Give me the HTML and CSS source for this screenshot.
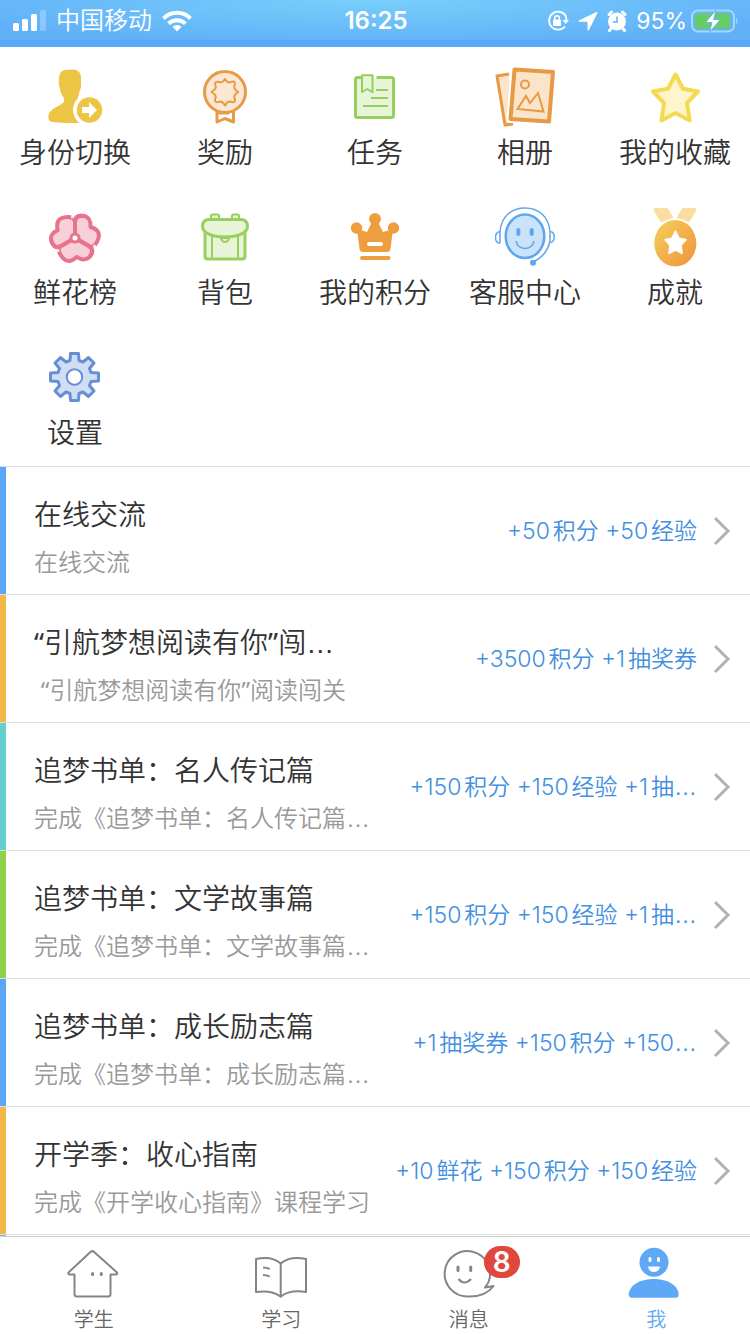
FILE: index.html
```html
<!DOCTYPE html>
<html lang="zh-CN">
<head>
<meta charset="utf-8">
<meta name="viewport" content="width=device-width, initial-scale=1">
<title>我</title>
<link rel="stylesheet" href="styles.css">
</head>
<body>
<header class="status">
  <div class="status-left">
    <svg width="33" height="22" viewBox="0 0 33 22" fill="#fff"><rect y="13" width="6" height="8" rx="1.5"/><rect x="9" y="9" width="6" height="12" rx="1.5"/><rect x="18" y="4" width="6" height="17" rx="1.5"/><rect x="27" y="0" width="6" height="21" rx="1.5" opacity=".25"/></svg>
    <span class="carrier">中国移动</span>
    <svg width="30" height="22" viewBox="0 0 30 22" fill="none" stroke="#fff" stroke-width="4"><path d="M1.500 8.500a19 19 0 0 1 27 0M6.600 13.600a12 12 0 0 1 16.800 0"/><path d="M15 21.500l-4.600-4.700a6.500 6.500 0 0 1 9.200 0z" fill="#fff" stroke="none"/></svg>
  </div>
  <time class="clock">16:25</time>
  <div class="status-right">
    <svg width="22" height="22" viewBox="0 0 22 22"><path d="M18.500 5.500A9 9 0 1 0 18 16.500M18.500 5.500q1 2 1 5" fill="none" stroke="#fff" stroke-width="1.800"/><path d="M15.500 10h6.500l-3.200 4z" fill="#fff"/><rect x="6" y="9.500" width="8" height="6.500" rx="1" fill="#fff"/><path d="M7.700 10V8a2.300 2.300 0 0 1 4.600 0v2" fill="none" stroke="#fff" stroke-width="1.500"/></svg>
    <svg width="20" height="20" viewBox="0 0 20 20" fill="#fff"><path d="M18.500 1L1.200 9.300c-1 .6-.6 1.400.2 1.400H9.500v8c0 .9 1 1.200 1.500.2L19.400 2c.3-.8-.2-1.200-.9-1z"/></svg>
    <svg width="20" height="22" viewBox="0 0 20 22"><circle cx="10" cy="11.500" r="9" fill="#fff"/><path d="M2 4.500L4.500 2M18 4.500L15.500 2M4 18.500l-1.500 2M16 18.500l1.500 2" stroke="#fff" stroke-width="3" stroke-linecap="round"/><path d="M10 6.500V12H5.800" fill="none" stroke="#62b1f8" stroke-width="1.500"/></svg>
    <span class="percent">95%</span>
    <svg width="48" height="24" viewBox="0 0 48 24"><rect x="1" y="1.500" width="42" height="21" rx="6" fill="none" stroke="#a8d5fc" stroke-width="2"/><path d="M45 8.500q3 3.500 0 7z" fill="#a8d5fc"/><rect x="4" y="4.500" width="35" height="15" rx="3" fill="#66cd62"/><path d="M25 1L14.500 13.500h6.500L18.500 23 29.500 10.500h-6.800z" fill="#fff" stroke="#66b4f5" stroke-width="1"/></svg>
  </div>
</header>

<main class="content">
<nav class="grid" aria-label="功能">
  <a class="entry" href="#"><svg class="icon" viewBox="0 0 60 60"><path d="M14 12C14 5 18 1.500 24 3c6-1.500 12 1 12 7.500v8c0 4-1.500 5-2 8-.5 3-2 5-1 8 2 3 7 3.500 12 6v15.300c-13 .5-27 .5-37-.8-4-.5-5-3-4.500-6.500.6-5 7-8 11.500-10.500 5-2.500 5-5 3-8.500-1.500-2.500-3-4-3-8-1-3-1.500-6-1-9z" fill="#ebc543"/><circle cx="44.500" cy="43" r="16.500" fill="#fff"/><circle cx="44.500" cy="43" r="12.700" fill="#ebc543"/><path d="M37 40h7v-5l8 8-8 8v-5h-7z" fill="#fff"/></svg><span>身份切换</span></a>
  <a class="entry" href="#"><svg class="icon" viewBox="0 0 60 60" fill="#fce8d2" stroke="#e79a48" stroke-linejoin="round"><path d="M22 42v13l8-3.500 8.500 3.500V42" fill="#fff" stroke-width="3"/><circle cx="30" cy="25" r="20.500" stroke-width="3"/><path d="M30 12q2.500 4 5 3.300 4-1.500 4.500-.1.800 1-.3 4.800 0 2.500 4 5-4 2.500-4 5 1.500 3.500.3 4.700-1 1.200-4.700-.2-2.300 0-4.800 4-2.500-4-4.800-4-3.700 1.300-4.700.2-1.200-1.200.3-4.700 0-2.500-4.300-5 4-2.500 4.300-5-1.300-3.700-.2-4.700 1-1.200 4.700 0Q28 15.500 30 12z" stroke-width="2"/><path d="M22 46.500h12" stroke-width="2"/></svg><span>奖励</span></a>
  <a class="entry" href="#"><svg class="icon" viewBox="0 0 60 60" fill="#e7f4d7" stroke="#96cf5b"><rect x="10.500" y="10.500" width="38" height="40" rx="2" stroke-width="3"/><path d="M28.500 7h3v18h-3z" fill="#fff" stroke="none"/><path d="M32 12v14h-4V12z" stroke="none"/><path d="M17 8.200h10.500v17L22.300 22 17 25z" stroke-width="2" stroke-linejoin="round"/><path d="M31 23h12M26 31h17M18 39h25" stroke-width="2"/></svg><span>任务</span></a>
  <a class="entry" href="#"><svg class="icon" viewBox="0 0 60 60" fill="#fbe4ca" stroke="#e79944" stroke-linejoin="round"><path d="M14 7L2 9l8 49 8-1" stroke-width="3"/><path d="M19.500 2.500L58 5l-4 49.500L15.500 52z" stroke="#fff" stroke-width="8"/><path d="M19.500 2.500L58 5l-4 49.500L15.500 52z" stroke-width="4"/><circle cx="30" cy="17.500" r="4" stroke-width="2"/><path d="M22.500 42l8.500-13 4 7 8-10 5.500 18.500z" stroke-width="2" stroke-linejoin="miter"/></svg><span>相册</span></a>
  <a class="entry" href="#"><svg class="icon" viewBox="0 0 60 60"><path d="M30.500 7.500L38 21.800l15 2.700-11 11.500 2.700 17.500-14.200-7.500-14 7.500L19 36 8 24.500l15-2.700z" fill="#fdf5cb" stroke="#f4da50" stroke-width="4" stroke-linejoin="round"/></svg><span>我的收藏</span></a>
  <a class="entry" href="#"><svg class="icon" viewBox="0 0 60 60" fill="#f9d0da" stroke="#e7748d" stroke-width="4" stroke-linecap="round" stroke-linejoin="round">
    <path d="M30 31V15c0-6 5-7 9-6 5 1 7 6 6.500 11 7 2 9.500 6 8 11-.8 3-2 5-3.500 7z"/>
    <path d="M30 31V15c0-6 5-7 9-6 5 1 7 6 6.500 11 7 2 9.500 6 8 11-.8 3-2 5-3.500 7z" transform="rotate(120 30 31)"/>
    <path d="M30 31V15c0-6 5-7 9-6 5 1 7 6 6.500 11 7 2 9.500 6 8 11-.8 3-2 5-3.500 7z" transform="rotate(240 30 31)"/>
    <g stroke="#f9d0da" stroke-width="6"><path d="M38 30l8 4.500"/><path d="M38 30l8 4.500" transform="rotate(120 30 31)"/><path d="M38 30l8 4.500" transform="rotate(240 30 31)"/></g>
    <g fill="none"><path d="M30 31V15c0-6 5-7 9-6"/><path d="M30 31V15c0-6 5-7 9-6" transform="rotate(120 30 31)"/><path d="M30 31V15c0-6 5-7 9-6" transform="rotate(240 30 31)"/></g>
    <g stroke="#fff" stroke-width="1.500"><path d="M49 38.500l5 3"/><path d="M49 38.500l5 3" transform="rotate(120 30 31)"/><path d="M49 38.500l5 3" transform="rotate(240 30 31)"/></g>
    <circle cx="30" cy="31" r="4" fill="#fff" stroke-width="3"/></svg><span>鲜花榜</span></a>
  <a class="entry" href="#"><svg class="icon" viewBox="0 0 60 60" fill="#e7f4d7" stroke="#97d05b"><path d="M16 13V9q0-1.500 1.500-1.500h5Q24 7.500 24 9v4M37 13V9q0-1.500 1.500-1.500h4Q44 7.500 44 9v4" stroke-width="2"/><path d="M10 24v25q0 3 3 3h34q3 0 3-3V24z" stroke-width="3"/><path d="M17 27v25M43 27v25" stroke-width="2"/><path d="M26 31q1 4 4 4t4-4z" stroke-width="2"/><path d="M14 12.500h32c5 0 6.500 3 6.500 7 0 7-11 10.500-22.500 10.500S7.500 26.500 7.500 19.500c0-4 1.500-7 6.500-7z" stroke-width="3"/></svg><span>背包</span></a>
  <a class="entry" href="#"><svg class="icon" viewBox="0 0 60 60" fill="#ef9e3f"><circle cx="30" cy="12" r="6"/><circle cx="11.500" cy="21" r="5.700"/><circle cx="48.500" cy="21" r="5.700"/><path d="M12 22l10 3 5-10h6l5 10 10-3-2.500 20q-.5 3-3.500 3H18q-3 0-3.500-3z"/><path d="M17 51h26.500" stroke="#ef9e3f" stroke-width="4" stroke-linecap="round"/><path d="M24 37h12" stroke="#fff" stroke-width="4" stroke-linecap="round"/></svg><span>我的积分</span></a>
  <a class="entry" href="#"><svg class="icon" viewBox="0 0 60 60" fill="none" stroke="#5ea6ee"><path d="M5 36V25C6 9 17 1 30 1s24 8 25 24v9c-2 9-8 17-17 21" stroke-width="1.500"/><path d="M5 24.500c-6 1-6 11 0 12M55.500 24.500c5 1 5 10 0 11" stroke-width="1.500"/><ellipse cx="30" cy="29.300" rx="19.300" ry="21.800" fill="#cae3fb" stroke-width="2.500"/><path d="M23.300 23v4M36.700 23v4" stroke-width="4" stroke-linecap="round"/><path d="M21 34c2 10 16 10 18 0" stroke-width="1.500"/><circle cx="38" cy="55.700" r="3" fill="#5ea6ee" stroke="none"/></svg><span>客服中心</span></a>
  <a class="entry" href="#"><svg class="icon" viewBox="0 0 60 60"><defs><linearGradient id="medal" x1="0" y1="0" x2="1" y2="1"><stop offset="0" stop-color="#f6cf5c"/><stop offset="1" stop-color="#ef923b"/></linearGradient></defs><path d="M10 1h11q2 0 3 2l4.500 8q-7 1-12.500 4.500L9 4q-1-3 1-3zM50 1H39q-2 0-3 2l-4.500 8q7 1 12.500 4.500L51 4q1-3-1-3z" fill="#f9dea0"/><ellipse cx="30.300" cy="36.300" rx="21" ry="23.300" fill="url(#medal)"/><path d="M30.500 24.500l3.300 7 7 1.200-5 5.500 1 8-6.300-3.500-6.300 3.500 1-8-5-5.500 7-1.200z" fill="#fff" stroke="#fff" stroke-width="2" stroke-linejoin="round"/></svg><span>成就</span></a>
  <a class="entry" href="#"><svg class="icon" viewBox="0 0 60 60" stroke="#6590d3"><path transform="translate(29.500 30)" d="M-4-23.500H4L4.500-16.500 8.500-15 14-19.500 19.500-14 15-8.500 16.500-4.500 24-4V4L16.500 4.500 15 8.500 19.500 14 14 19.500 8.500 15 4.500 16.500 4 23.500H-4L-4.500 16.500-8.500 15-14 19.500-19.500 14-15 8.500-16.500 4.500-24 4V-4L-16.500-4.500-15-8.500-19.500-14-14-19.500-8.500-15-4.500-16.500z" fill="#d1ddf3" stroke-width="3" stroke-linejoin="round"/><circle cx="29.500" cy="30" r="7.700" fill="#fff" stroke-width="2"/></svg><span>设置</span></a>
</nav>

<ul class="tasks">
  <li class="task blue"><a class="task-link" href="#"><span class="texts"><span class="title">在线交流</span><span class="sub">在线交流</span></span><span class="reward">+50积分 +50经验</span><svg class="chevron" viewBox="0 0 18 30"><path d="M2 2l13 13L2 28"/></svg></a></li>
  <li class="task orange"><a class="task-link" href="#"><span class="texts"><span class="title"><span class="quote">“</span>引航梦想阅读有你<span class="quote">”</span>闯<span class="dots">…</span></span><span class="sub">&nbsp;<span class="quote">“</span>引航梦想阅读有你<span class="quote">”</span>阅读闯关</span></span><span class="reward">+3500积分 +1抽奖券</span><svg class="chevron" viewBox="0 0 18 30"><path d="M2 2l13 13L2 28"/></svg></a></li>
  <li class="task teal"><a class="task-link" href="#"><span class="texts"><span class="title">追梦书单：名人传记篇</span><span class="sub">完成《追梦书单：名人传记篇<span class="dots">…</span></span></span><span class="reward">+150积分 +150经验 +1抽<span class="dots">…</span></span><svg class="chevron" viewBox="0 0 18 30"><path d="M2 2l13 13L2 28"/></svg></a></li>
  <li class="task green"><a class="task-link" href="#"><span class="texts"><span class="title">追梦书单：文学故事篇</span><span class="sub">完成《追梦书单：文学故事篇<span class="dots">…</span></span></span><span class="reward">+150积分 +150经验 +1抽<span class="dots">…</span></span><svg class="chevron" viewBox="0 0 18 30"><path d="M2 2l13 13L2 28"/></svg></a></li>
  <li class="task blue"><a class="task-link" href="#"><span class="texts"><span class="title">追梦书单：成长励志篇</span><span class="sub">完成《追梦书单：成长励志篇<span class="dots">…</span></span></span><span class="reward">+1抽奖券 +150积分 +150<span class="dots">…</span></span><svg class="chevron" viewBox="0 0 18 30"><path d="M2 2l13 13L2 28"/></svg></a></li>
  <li class="task orange"><a class="task-link" href="#"><span class="texts"><span class="title">开学季：收心指南</span><span class="sub">完成《开学收心指南》课程学习</span></span><span class="reward">+10鲜花 +150积分 +150经验</span><svg class="chevron" viewBox="0 0 18 30"><path d="M2 2l13 13L2 28"/></svg></a></li>
  <li class="task teal"></li>
</ul>
</main>

<nav class="tabs" aria-label="主导航">
  <a class="tab" href="#"><span class="tab-icon"><svg viewBox="0 0 60 56" fill="none" stroke="#858585" stroke-width="2" stroke-linejoin="round" stroke-linecap="round"><path d="M10.500 28.500H5q-1.500-1 0-2.500L26.500 6q1.800-1.700 3.600 0L52.500 26q1.500 1.500 0 2.500h-6V48q0 2.500-2.500 2.500H13q-2.500 0-2.500-2.500z"/><path d="M28.600 27.500v1M37.300 27.500v1" stroke-width="3"/></svg></span><span>学生</span></a>
  <a class="tab" href="#"><span class="tab-icon"><svg viewBox="0 0 60 56" fill="none" stroke="#858585" stroke-width="2" stroke-linejoin="round"><path d="M29.700 17.500C23 11.500 14 11 5 13v33c10-1.500 18-.5 24.700 4.700C36 45.500 45 44.500 55 46V13c-9-2-18.500-1.500-25.300 4.500zV50.500"/><path d="M12 21.500q3.500 0 6.700 1.500M12 29q3.500 0 6.700 1.500"/></svg></span><span>学习</span></a>
  <a class="tab" href="#"><span class="tab-icon"><svg viewBox="0 0 60 56" fill="none" stroke="#858585" stroke-width="2" stroke-linejoin="round"><path d="M49.700 35.500A22.700 22.700 0 1 0 28 50.500C39 51 48 49 54.500 40l-8.500 1.500q2.500-3 3.700-6z"/><path d="M19 21v3.500M31.700 21v3.500" stroke-width="3" stroke-linecap="round"/><path d="M19.500 33q6 7 12.500 0"/></svg><span class="badge">8</span></span><span>消息</span></a>
  <a class="tab active" href="#" aria-current="page"><span class="tab-icon"><svg viewBox="0 0 60 56" fill="#5ea8f5"><circle cx="28" cy="16.300" r="14.500"/><path d="M2.700 48C4 38 16 33 27.700 33s24 5 25 15q0 3.700-3 3.700H6q-3.300 0-3.300-3.700z"/><path d="M24 12.500v2M32.500 12.500v2" stroke="#fff" stroke-width="3" stroke-linecap="round"/><path d="M22 20.500h12q-1 5.500-6 5.500t-6-5.500z" fill="#fff"/></svg></span><span>我</span></a>
</nav>
</body>
</html>
```
FILE: styles.css
```css
* { box-sizing: border-box; }
body {
  margin: 0;
  height: 100vh;
  display: flex;
  flex-direction: column;
  background: #fff;
  color: #333;
  font-family: Inter, "Noto Sans CJK SC", sans-serif;
  font-weight: 350;
  text-autospace: normal;
}
a { color: inherit; text-decoration: none; }
svg { display: block; flex: none; }

.status {
  flex: none;
  display: grid;
  grid-template-columns: 1fr auto 1fr;
  align-items: center;
  height: 47px;
  padding: 1px 11px 0 13px;
  border-bottom: 7px solid #5ba7f7;
  background: radial-gradient(ellipse 60% 110% at 50% 0, #78cffb, #62b1f8);
  color: #fff;
}
.status-left, .status-right { display: flex; align-items: center; }
.status-left { gap: 10px; }
.status-right { justify-content: flex-end; gap: 9px; }
.carrier { font-size: 24px; line-height: 32px; }
.clock { font-size: 24px; line-height: 32px; font-weight: 600; }
.percent { font-size: 23px; line-height: 32px; font-weight: 400; margin-right: -5px; }

.content { flex: 1; min-height: 0; overflow-y: auto; scrollbar-width: none; }
.grid {
  display: grid;
  grid-template-columns: repeat(5, 1fr);
  border-bottom: 1px solid #dedede;
}
.entry {
  display: flex;
  flex-direction: column;
  align-items: center;
  gap: 11px;
  padding: 20px 0 19px;
  font-size: 28px;
  line-height: 30px;
  white-space: nowrap;
}
.entry:last-child { padding-bottom: 18px; }
.icon { width: 60px; height: 60px; }

.tasks { list-style: none; margin: 0; padding: 0; }
.task { min-height: 128px; border-bottom: 1px solid #dedede; display: flex; }
.task::before { content: ""; flex: none; width: 6px; background: #5ba7f7; }
.task.orange::before { background: #f5b748; }
.task.teal::before { background: #65cfcf; }
.task.green::before { background: #8fd149; }
.task-link {
  flex: 1;
  min-width: 0;
  display: flex;
  align-items: center;
  padding: 0 19px 0 28px;
}
.texts { flex: 1; min-width: 0; display: flex; flex-direction: column; gap: 8px; padding-top: 16px; white-space: nowrap; }
.title { font-size: 28px; line-height: 40px; }
.sub { font-size: 24px; line-height: 40px; color: #999; }
.reward { font-size: 23px; line-height: 32px; color: #438fe0; white-space: nowrap; }
.dots { font-family: "Liberation Sans", sans-serif; line-height: 1; }
.quote { font-family: "Noto Sans", sans-serif; font-weight: 400; line-height: 1; }
.chevron { width: 18px; height: 30px; margin-left: 16px; fill: none; stroke: #b2b2b2; stroke-width: 3; }

.tabs {
  flex: none;
  display: grid;
  grid-template-columns: repeat(4, 1fr);
  border-top: 1px solid #ccc;
  background: #fff;
  color: #666;
}
.tab {
  display: flex;
  flex-direction: column;
  align-items: center;
  gap: 4px;
  padding: 9px 0 0;
  font-size: 20px;
  line-height: 28px;
}
.tab.active { color: #5ea8f5; }
.tab-icon { position: relative; width: 60px; height: 56px; }
.badge {
  position: absolute;
  top: 0;
  left: 45px;
  width: 36px;
  height: 32px;
  border-radius: 16px;
  background: #df483d;
  color: #fff;
  font-size: 28px;
  line-height: 32px;
  font-weight: 600;
  text-align: center;
}
```
